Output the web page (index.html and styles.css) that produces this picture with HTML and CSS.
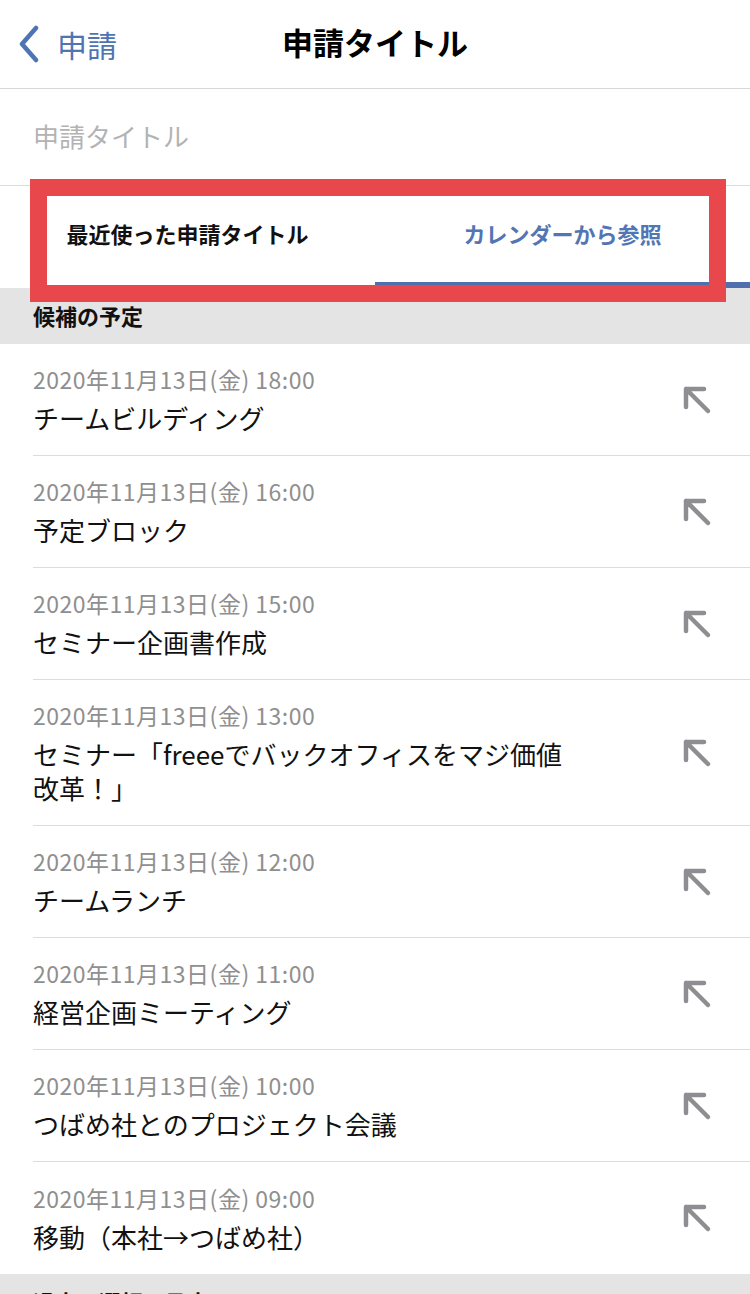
FILE: index.html
```html
<!DOCTYPE html>
<html lang="ja">
<head>
<meta charset="utf-8">
<link rel="stylesheet" href="styles.css">
</head>
<body>
<div class="screen">
  <header class="nav">
    <div class="nav-back">
      <svg class="chev" width="26" height="38" viewBox="0 0 26 38"><path d="M20 3 L6 19 L20 35" fill="none" stroke="#4f74b3" stroke-width="4.5" stroke-linecap="round" stroke-linejoin="round"/></svg>
      <span class="back-label">申請</span>
    </div>
    <h1 class="nav-title">申請タイトル</h1>
  </header>
  <div class="input-row">申請タイトル</div>
  <div class="tabs">
    <div class="tab">最近使った申請タイトル</div>
    <div class="tab active">カレンダーから参照</div>
    <div class="highlight"></div>
  </div>
  <div class="section">候補の予定</div>
  <ul class="list">
    <li class="item"><div class="text"><div class="date">2020年11月13日(金) 18:00</div><div class="title">チームビルディング</div></div><svg class="arrow" viewBox="0 0 30 30"><path d="M4 22 V4 H22 M4 4 L26 26" fill="none" stroke="#8e8e92" stroke-width="4.5" stroke-linecap="round" stroke-linejoin="round"/></svg></li>
    <li class="item"><div class="text"><div class="date">2020年11月13日(金) 16:00</div><div class="title">予定ブロック</div></div><svg class="arrow" viewBox="0 0 30 30"><path d="M4 22 V4 H22 M4 4 L26 26" fill="none" stroke="#8e8e92" stroke-width="4.5" stroke-linecap="round" stroke-linejoin="round"/></svg></li>
    <li class="item"><div class="text"><div class="date">2020年11月13日(金) 15:00</div><div class="title">セミナー企画書作成</div></div><svg class="arrow" viewBox="0 0 30 30"><path d="M4 22 V4 H22 M4 4 L26 26" fill="none" stroke="#8e8e92" stroke-width="4.5" stroke-linecap="round" stroke-linejoin="round"/></svg></li>
    <li class="item"><div class="text"><div class="date">2020年11月13日(金) 13:00</div><div class="title">セミナー「freeeでバックオフィスをマジ価値<br>改革！」</div></div><svg class="arrow" viewBox="0 0 30 30"><path d="M4 22 V4 H22 M4 4 L26 26" fill="none" stroke="#8e8e92" stroke-width="4.5" stroke-linecap="round" stroke-linejoin="round"/></svg></li>
    <li class="item"><div class="text"><div class="date">2020年11月13日(金) 12:00</div><div class="title">チームランチ</div></div><svg class="arrow" viewBox="0 0 30 30"><path d="M4 22 V4 H22 M4 4 L26 26" fill="none" stroke="#8e8e92" stroke-width="4.5" stroke-linecap="round" stroke-linejoin="round"/></svg></li>
    <li class="item"><div class="text"><div class="date">2020年11月13日(金) 11:00</div><div class="title">経営企画ミーティング</div></div><svg class="arrow" viewBox="0 0 30 30"><path d="M4 22 V4 H22 M4 4 L26 26" fill="none" stroke="#8e8e92" stroke-width="4.5" stroke-linecap="round" stroke-linejoin="round"/></svg></li>
    <li class="item"><div class="text"><div class="date">2020年11月13日(金) 10:00</div><div class="title">つばめ社とのプロジェクト会議</div></div><svg class="arrow" viewBox="0 0 30 30"><path d="M4 22 V4 H22 M4 4 L26 26" fill="none" stroke="#8e8e92" stroke-width="4.5" stroke-linecap="round" stroke-linejoin="round"/></svg></li>
    <li class="item last"><div class="text"><div class="date">2020年11月13日(金) 09:00</div><div class="title">移動（本社→つばめ社）</div></div><svg class="arrow" viewBox="0 0 30 30"><path d="M4 22 V4 H22 M4 4 L26 26" fill="none" stroke="#8e8e92" stroke-width="4.5" stroke-linecap="round" stroke-linejoin="round"/></svg></li>
  </ul>
  <div class="section">過去の選択の予定</div>
</div>
</body>
</html>
```

FILE: styles.css
```css
* { box-sizing: border-box; margin: 0; padding: 0; }
html, body { width: 750px; height: 1294px; overflow: hidden; background: #fff; }
body { font-family: "Noto Sans CJK JP", "Noto Sans", sans-serif; color: #111; }
.screen { position: relative; width: 750px; }

.nav { height: 89px; display: flex; align-items: center; justify-content: center; position: relative; border-bottom: 1px solid #d8d8d8; padding-bottom: 4px; }
.nav-back { position: absolute; left: 16px; top: 24px; display: flex; align-items: center; gap: 15px; }
.back-label { font-size: 30px; color: #4f74b3; line-height: 40px; }
.nav-title { font-size: 31px; font-weight: 700; line-height: 40px; color: #000; }

.input-row { height: 97px; display: flex; align-items: center; padding-left: 33px; padding-bottom: 4px; font-size: 26px; color: #b3b3b3; border-bottom: 1px solid #dcdcdc; }

.tabs { position: relative; height: 102px; display: flex; }
.tab { flex: 1; display: flex; align-items: center; justify-content: center; font-size: 22px; font-weight: 700; color: #111; padding-bottom: 8px; }
.tab.active { color: #5275b4; border-bottom: 6px solid #4f6fae; padding-bottom: 2px; }
.highlight { position: absolute; left: 30px; top: -7px; width: 696px; height: 123px; border: 17px solid #e8474c; pointer-events: none; }

.section { height: 56px; background: #e4e4e4; display: flex; align-items: center; padding-left: 33px; padding-bottom: 2px; font-size: 22px; font-weight: 700; color: #111; }

.list { list-style: none; padding-left: 33px; }
.item { display: flex; align-items: center; justify-content: space-between; border-bottom: 1px solid #dcdcdc; padding: 20px 0 20px; min-height: 112px; }
.item.last { border-bottom: none; }
.text { flex: 1; }
.date { font-size: 23px; color: #8f8f8f; line-height: 30px; letter-spacing: 0.5px; }
.title { font-size: 26px; line-height: 34px; margin-top: 7px; color: #111; }
.arrow { width: 30px; height: 30px; margin-right: 38px; flex: none; }
```
